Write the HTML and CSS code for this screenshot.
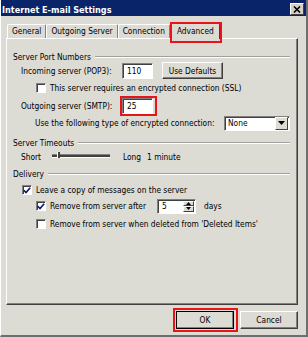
FILE: index.html
```html
<!DOCTYPE html>
<html lang="en">
<head>
  <meta charset="UTF-8" />
  <title>Internet E-mail Settings</title>
  <link rel="stylesheet" href="styles.css">
</head>
<body>
  <div class="window">
    <div class="titlebar">
      <span class="title">Internet E-mail Settings</span>
      <span class="close">
        <svg width="8" height="7" viewBox="0 0 8 7"><path d="M1 0.5 L7 6.5 M7 0.5 L1 6.5" stroke="#000" stroke-width="1.6" fill="none"/></svg>
      </span>
    </div>

    <div class="tabs">
      <div class="tab">General</div>
      <div class="tab">Outgoing Server</div>
      <div class="tab">Connection</div>
      <div class="tab active marked">Advanced</div>
    </div>

    <div class="panel">
      <div class="group g-ports"><span>Server Port Numbers</span><div class="rule"></div></div>

      <div class="row r-in">
        <span class="lbl">Incoming server (POP3):</span>
        <div class="field">110</div>
        <button class="btn defaults">Use Defaults</button>
      </div>

      <div class="row r-ssl sub">
        <span class="check"></span>
        <span>This server requires an encrypted connection (SSL)</span>
      </div>

      <div class="row r-out">
        <span class="lbl">Outgoing server (SMTP):</span>
        <div class="field marked">25</div>
      </div>

      <div class="row r-enc sub-text">
        <span>Use the following type of encrypted connection:</span>
        <div class="select">
          <span>None</span>
          <span class="drop">
            <svg width="7" height="4" viewBox="0 0 7 4"><path d="M0 0 H7 L3.5 4 Z" fill="#000"/></svg>
          </span>
        </div>
      </div>

      <div class="group g-time"><span>Server Timeouts</span><div class="rule"></div></div>

      <div class="row r-short">
        <span class="lbl-short">Short</span>
        <div class="slider"><span class="thumb"></span></div>
        <span class="long">Long</span>
        <span>1 minute</span>
      </div>

      <div class="group g-del"><span>Delivery</span><div class="rule"></div></div>

      <div class="row r-leave lvl1">
        <span class="check on">
          <svg width="8" height="7" viewBox="0 0 8 7"><path d="M0.8 3.2 L3 5.6 L7.2 0.8" stroke="#0a1a6a" stroke-width="1.6" fill="none"/></svg>
        </span>
        <span>Leave a copy of messages on the server</span>
      </div>

      <div class="row r-after sub">
        <span class="check on">
          <svg width="8" height="7" viewBox="0 0 8 7"><path d="M0.8 3.2 L3 5.6 L7.2 0.8" stroke="#0a1a6a" stroke-width="1.6" fill="none"/></svg>
        </span>
        <span class="after-text">Remove from server after</span>
        <div class="spin">
          <span class="val">5</span>
          <span class="arrows">
            <span class="arr"><svg width="5" height="3" viewBox="0 0 5 3"><path d="M0 3 H5 L2.5 0 Z" fill="#000"/></svg></span>
            <span class="arr"><svg width="5" height="3" viewBox="0 0 5 3"><path d="M0 0 H5 L2.5 3 Z" fill="#000"/></svg></span>
          </span>
        </div>
        <span class="days">days</span>
      </div>

      <div class="row r-deleted sub">
        <span class="check"></span>
        <span>Remove from server when deleted from 'Deleted Items'</span>
      </div>
    </div>

    <div class="buttons">
      <button class="btn dlg default marked">OK</button>
      <button class="btn dlg">Cancel</button>
    </div>
  </div>
</body>
</html>
```

FILE: styles.css
```css
body {
  margin: 0;
  background: #dcdbd4;
  font-family: "DejaVu Sans Condensed", "DejaVu Sans", sans-serif;
  font-stretch: condensed;
  font-size: 8.3px;
  color: #000;
}
.window {
  width: 308px;
  height: 337px;
  box-sizing: border-box;
  border-left: 1px solid #fff;
  border-right: 2px solid #6e6e6e;
  border-bottom: 2px solid #6e6e6e;
  background: #dcdbd4;
}
.titlebar {
  height: 16px;
  background: #0a246a;
  display: flex;
  align-items: center;
  justify-content: space-between;
  padding: 0 2px 0 1px;
}
.title {
  color: #fff;
  font-weight: bold;
  font-size: 9px;
  padding-top: 3px;
}
.close {
  width: 12px;
  height: 10px;
  background: #d4d0c8;
  border-top: 1px solid #fff;
  border-left: 1px solid #fff;
  border-right: 1px solid #404040;
  border-bottom: 1px solid #404040;
  display: flex;
  align-items: center;
  justify-content: center;
  margin-top: 2px;
}

/* tabs */
.tabs {
  display: flex;
  align-items: flex-end;
  height: 22px;
  padding-left: 6px;
}
.tab {
  height: 13px;
  line-height: 13px;
  padding: 0 4px;
  border-top: 1px solid #fff;
  border-left: 1px solid #fff;
  border-right: 1px solid #808080;
  border-radius: 2px 2px 0 0;
}
.tab.active {
  height: 15px;
  line-height: 14px;
  padding: 0 5px;
  margin: 0 0 -1px 1px;
  background: #dcdbd4;
  border-right: 1px solid #404040;
  position: relative;
  z-index: 1;
}
.marked {
  position: relative;
}
.marked::after {
  content: "";
  position: absolute;
  border: 2px solid #e8141c;
  pointer-events: none;
}
.tab.marked::after {
  top: -2px;
  left: -2px;
  right: -3px;
  bottom: -4px;
}

/* panel */
.panel {
  margin-left: 5px;
  width: 292px;
  height: 267px;
  box-sizing: border-box;
  border-top: 1px solid #fff;
  border-left: 1px solid #fff;
  border-right: 1px solid #404040;
  border-bottom: 1px solid #404040;
  box-shadow: inset -1px -1px 0 #808080;
  padding: 0 7px 0 6px;
  display: flex;
  flex-direction: column;
}
.group {
  display: flex;
  align-items: center;
  height: 11px;
}
.rule {
  flex: 1;
  margin-left: 4px;
  border-top: 1px solid #a0a0a0;
  border-bottom: 1px solid #fff;
}
.g-ports { margin-top: 12px; }
.g-time { margin-top: 6px; }
.g-del { margin-top: 3px; }

.row {
  display: flex;
  align-items: center;
  height: 16px;
  padding-left: 8px;
  white-space: nowrap;
}
.row.sub { padding-left: 23px; }
.row.lvl1 { padding-left: 9px; }
.row.sub-text { padding-left: 22px; }
.r-in { height: 17px; }
.r-ssl { margin-top: 1px; }
.r-out { margin-top: 1px; height: 17px; }
.r-enc { margin-top: 1px; }
.r-short { margin-top: 1px; }
.r-leave { margin-top: 3px; }
.r-deleted { margin-top: 2px; }

.lbl {
  width: 101px;
}
.field {
  width: 31px;
  height: 16px;
  box-sizing: border-box;
  background: #fff;
  border-top: 1px solid #808080;
  border-left: 1px solid #808080;
  border-right: 1px solid #fff;
  border-bottom: 1px solid #fff;
  box-shadow: inset 1px 1px 0 #404040;
  padding: 2px 0 0 4px;
}
.field.marked::after {
  top: -3px;
  left: -3px;
  right: -5px;
  bottom: -3px;
}

.btn {
  font: inherit;
  font-stretch: condensed;
  color: #000;
  background: #dcdbd4;
  border-top: 1px solid #fff;
  border-left: 1px solid #fff;
  border-right: 1px solid #404040;
  border-bottom: 1px solid #404040;
  box-shadow: inset -1px -1px 0 #808080;
  padding: 0;
  box-sizing: border-box;
}
.defaults {
  width: 61px;
  height: 17px;
  margin-left: 9px;
}

.check {
  width: 10px;
  height: 10px;
  box-sizing: border-box;
  background: #fff;
  border-top: 1px solid #808080;
  border-left: 1px solid #808080;
  border-right: 1px solid #fff;
  border-bottom: 1px solid #fff;
  box-shadow: inset 1px 1px 0 #404040;
  margin-right: 4px;
  display: flex;
  align-items: center;
  justify-content: center;
}

.select {
  margin-left: auto;
  width: 66px;
  height: 15px;
  box-sizing: border-box;
  background: #fff;
  border-top: 1px solid #808080;
  border-left: 1px solid #808080;
  border-right: 1px solid #fff;
  border-bottom: 1px solid #fff;
  box-shadow: inset 1px 1px 0 #404040;
  display: flex;
  align-items: center;
  justify-content: space-between;
  padding: 0 1px 0 3px;
}
.drop {
  width: 11px;
  height: 11px;
  background: #dcdbd4;
  border-top: 1px solid #fff;
  border-left: 1px solid #fff;
  border-right: 1px solid #404040;
  border-bottom: 1px solid #404040;
  display: flex;
  align-items: center;
  justify-content: center;
}

.lbl-short { width: 31px; }
.slider {
  width: 58px;
  height: 2px;
  border-top: 1px solid #808080;
  border-bottom: 1px solid #fff;
  background: #404040;
  position: relative;
  margin-top: -2px;
}
.thumb {
  position: absolute;
  left: 5px;
  top: -3px;
  width: 2px;
  height: 6px;
  background: #404040;
  border-left: 1px solid #fff;
}
.long {
  margin: 0 6px 0 13px;
}

.after-text { width: 107px; }
.spin {
  width: 39px;
  height: 15px;
  box-sizing: border-box;
  background: #fff;
  border-top: 1px solid #808080;
  border-left: 1px solid #808080;
  border-right: 1px solid #fff;
  border-bottom: 1px solid #fff;
  box-shadow: inset 1px 1px 0 #404040;
  display: flex;
  align-items: center;
  justify-content: space-between;
  padding: 0 1px 0 4px;
}
.arrows {
  display: flex;
  flex-direction: column;
  height: 11px;
}
.arr {
  width: 11px;
  flex: 1;
  box-sizing: border-box;
  background: #dcdbd4;
  border-top: 1px solid #fff;
  border-left: 1px solid #fff;
  border-right: 1px solid #404040;
  border-bottom: 1px solid #404040;
  display: flex;
  align-items: center;
  justify-content: center;
}
.days { margin-left: 8px; }

/* dialog buttons */
.buttons {
  display: flex;
  justify-content: flex-end;
  gap: 6px;
  padding: 6px 8px 0 0;
}
.dlg {
  width: 58px;
  height: 18px;
}
.dlg.default {
  outline: 1px solid #000;
  outline-offset: -1px;
}
.dlg.marked::after {
  top: -4px;
  left: -4px;
  right: -5px;
  bottom: -4px;
}
```
